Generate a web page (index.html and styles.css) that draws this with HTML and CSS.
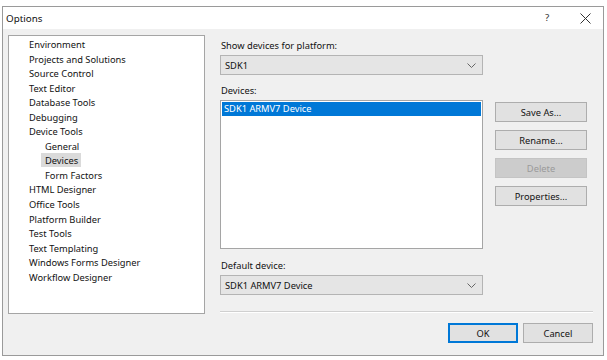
FILE: index.html
```html
<!DOCTYPE html>
<html>
<head>
<meta charset="utf-8">
<link rel="stylesheet" href="styles.css">
</head>
<body>
<div class="window">
  <div class="titlebar">
    <span class="title">Options</span>
    <span class="help">?</span>
    <span class="close"><svg width="11" height="11" viewBox="0 0 11 11"><path d="M0.5 0.5 L10.5 10.5 M10.5 0.5 L0.5 10.5" stroke="#333" stroke-width="1" fill="none"/></svg></span>
  </div>
  <div class="content">
    <div class="tree">
      <div class="node">Environment</div>
      <div class="node">Projects and Solutions</div>
      <div class="node">Source Control</div>
      <div class="node">Text Editor</div>
      <div class="node">Database Tools</div>
      <div class="node">Debugging</div>
      <div class="node">Device Tools</div>
      <div class="node sub">General</div>
      <div class="node sub"><span class="sel">Devices</span></div>
      <div class="node sub">Form Factors</div>
      <div class="node">HTML Designer</div>
      <div class="node">Office Tools</div>
      <div class="node">Platform Builder</div>
      <div class="node">Test Tools</div>
      <div class="node">Text Templating</div>
      <div class="node">Windows Forms Designer</div>
      <div class="node">Workflow Designer</div>
    </div>
    <div class="main">
      <div class="top">
        <div class="fields">
          <div class="label l1">Show devices for platform:</div>
          <div class="combo"><span>SDK1</span><svg class="chev" width="9" height="5" viewBox="0 0 9 5"><path d="M0.5 0.5 L4.5 4.5 L8.5 0.5" stroke="#666" fill="none"/></svg></div>
          <div class="label l2">Devices:</div>
          <div class="list">
            <div class="item selected">SDK1 ARMV7 Device</div>
          </div>
          <div class="label l3">Default device:</div>
          <div class="combo"><span>SDK1 ARMV7 Device</span><svg class="chev" width="9" height="5" viewBox="0 0 9 5"><path d="M0.5 0.5 L4.5 4.5 L8.5 0.5" stroke="#666" fill="none"/></svg></div>
        </div>
        <div class="side">
          <div class="btn">Save As...</div>
          <div class="btn">Rename...</div>
          <div class="btn disabled">Delete</div>
          <div class="btn">Properties...</div>
        </div>
      </div>
      <div class="sep"></div>
      <div class="footer">
        <div class="btn wide default">OK</div>
        <div class="btn wide">Cancel</div>
      </div>
    </div>
  </div>
</div>
</body>
</html>
```
FILE: styles.css
```css
html, body {
  margin: 0;
  padding: 0;
  background: #ffffff;
}
body {
  padding: 6px 0 0 2px;
  font-family: "Noto Sans", "Open Sans", sans-serif;
  font-size: 9.3px;
  color: #111111;
}
.window {
  width: 600px;
  height: 348px;
  border: 1px solid #9a9a9a;
  background: #f0f0f0;
  display: flex;
  flex-direction: column;
}
.titlebar {
  height: 22px;
  background: #ffffff;
  display: flex;
  align-items: center;
  font-size: 9.8px;
}
.title {
  padding-left: 3px;
  flex: 1;
}
.help {
  width: 12px;
  color: #333;
  margin-top: -2px;
}
.close {
  display: flex;
  margin-left: 23px;
  margin-right: 12px;
}
.content {
  display: flex;
  padding: 6px 0 0 5px;
}
.tree {
  width: 195px;
  height: 275px;
  border: 1px solid #a5a5a5;
  background: #ffffff;
  padding-top: 2px;
  box-sizing: content-box;
}
.node {
  height: 14.55px;
  line-height: 14px;
  padding-left: 20px;
  white-space: nowrap;
}
.node.sub {
  padding-left: 36px;
}
.sel {
  background: #dadada;
  padding: 1px 3px 0 4px;
  margin-left: -4px;
}
.main {
  margin-left: 15px;
  width: 373px;
  display: flex;
  flex-direction: column;
}
.top {
  display: flex;
}
.fields {
  width: 263px;
  display: flex;
  flex-direction: column;
}
.label {
  height: 14px;
  line-height: 14px;
  padding-left: 1px;
}
.l1 { margin-top: 4px; margin-bottom: 2px; }
.l2 { margin-top: 9px; margin-bottom: 2px; }
.l3 { margin-top: 10px; margin-bottom: 2px; }
.combo {
  height: 18px;
  border: 1px solid #b4b4b4;
  background: #e5e5e5;
  display: flex;
  align-items: center;
  padding: 0 6px 0 4px;
}
.combo span {
  flex: 1;
}
.chev {
  display: block;
}
.list {
  height: 145px;
  border: 1px solid #a5a5a5;
  background: #ffffff;
  padding: 1px;
}
.item {
  height: 14px;
  line-height: 14px;
  padding-left: 2px;
}
.item.selected {
  background: #0078d7;
  color: #ffffff;
}
.side {
  margin-left: 12px;
  padding-top: 67px;
  display: flex;
  flex-direction: column;
  gap: 8px;
}
.btn {
  width: 90px;
  height: 18px;
  border: 1px solid #adadad;
  background: #e1e1e1;
  display: flex;
  align-items: center;
  justify-content: center;
}
.btn.disabled {
  background: #cccccc;
  border-color: #c4c4c4;
  color: #9a9a9a;
}
.sep {
  margin-top: 16px;
  height: 0;
  border-top: 1px solid #d0d0d0;
  border-bottom: 1px solid #ffffff;
}
.footer {
  display: flex;
  justify-content: flex-end;
  gap: 5px;
  margin-top: 10px;
}
.btn.wide {
  width: 68px;
}
.btn.default {
  border: 2px solid #0078d7;
  width: 66px;
  height: 16px;
}
```
